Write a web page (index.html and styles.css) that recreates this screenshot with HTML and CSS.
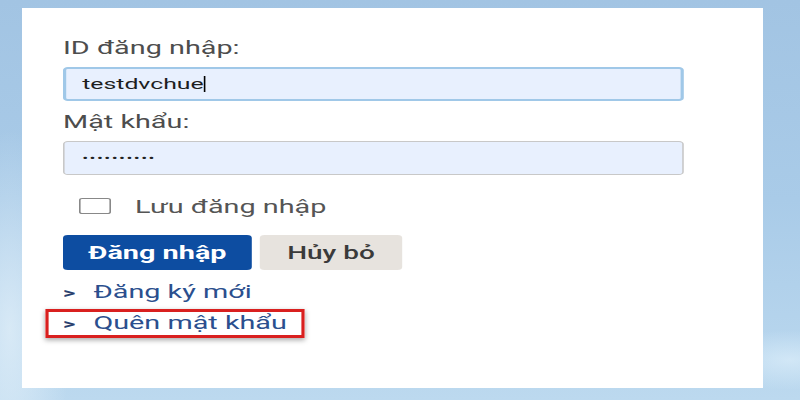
FILE: index.html
```html
<!DOCTYPE html>
<html lang="vi">

<head>
  <meta charset="UTF-8">
  <meta name="viewport" content="width=device-width, initial-scale=1.0">
  <title>Đăng nhập</title>
  <link rel="stylesheet" href="styles.css">
</head>

<body>

  <div class="card">
    <div class="form">
      <div class="label">ID đăng nhập:</div>
      <div class="field field-focus">
        <span class="value">testdvchue</span><span class="caret"></span>
      </div>

      <div class="label label-second">Mật khẩu:</div>
      <div class="field">
        <span class="dots">••••••••••</span>
      </div>

      <div class="remember">
        <span class="checkbox"></span>
        <span class="remember-text">Lưu đăng nhập</span>
      </div>

      <div class="buttons">
        <span class="btn btn-primary">Đăng nhập</span>
        <span class="btn btn-cancel">Hủy bỏ</span>
      </div>

      <div class="link"><span class="arrow">&gt;</span>Đăng ký mới</div>
      <div class="link link-marked"><span class="arrow">&gt;</span>Quên mật khẩu</div>
    </div>
  </div>

</body>

</html>
```

FILE: styles.css
```css
:root {
  --stretch: 1.6;
  --text-colour: #4d4d4d;
  --link-colour: #2b4f8e;
  --field-bg: #e8f0fe;
}

html,
body {
  margin: 0;
  padding: 0;
  height: 100%;
}

body {
  font-family: Roboto, "Liberation Sans", sans-serif;
  background-color: #a9cbe8;
  background-image:
    radial-gradient(ellipse 60px 200px at 10px 330px, rgba(230, 242, 250, 0.7), transparent),
    radial-gradient(ellipse 80px 30px at 790px 360px, rgba(220, 238, 250, 0.7), transparent),
    linear-gradient(180deg, #a2c4e3 0%, #a9cbe8 50%, #bcd9ef 100%);
  overflow: hidden;
}

.card {
  margin: 8px 0 0 22px;
  width: 741px;
  height: 380px;
  box-sizing: border-box;
  padding: 30px 0 0 41px;
  background-color: #fff;
}

.form {
  width: 388px;
  transform: scaleX(var(--stretch));
  transform-origin: 0 0;
}

.label {
  font-size: 18px;
  line-height: 20px;
  color: var(--text-colour);
  margin-bottom: 9px;
}

.label-second {
  margin-top: 11px;
}

.field {
  height: 34px;
  box-sizing: border-box;
  border: 1px solid #c8c8c8;
  border-radius: 3px;
  background-color: var(--field-bg);
  padding-left: 11px;
  display: flex;
  align-items: center;
}

.field-focus {
  border: 2px solid #a0c8e8;
  padding-left: 10px;
}

.value {
  font-size: 15.5px;
  color: #1e1e1e;
}

.caret {
  width: 1px;
  height: 16px;
  background-color: #000;
}

.dots {
  font-size: 11px;
  letter-spacing: 0.9px;
  color: #222;
  padding-top: 1px;
}

.remember {
  display: flex;
  align-items: center;
  height: 20px;
  margin-top: 21px;
  padding-left: 10px;
}

.checkbox {
  width: 18px;
  height: 14px;
  border: 1px solid #888;
  border-radius: 2px;
  margin-right: 15px;
}

.remember-text {
  font-size: 18px;
  color: #555;
}

.buttons {
  display: flex;
  gap: 5px;
  margin-top: 19px;
}

.btn {
  height: 35px;
  box-sizing: border-box;
  display: inline-flex;
  align-items: center;
  justify-content: center;
  border-radius: 3px;
  font-size: 18px;
  font-weight: 700;
}

.btn-primary {
  width: 118px;
  background-color: #0d4da1;
  color: #fff;
}

.btn-cancel {
  width: 89px;
  background-color: #e7e3de;
  color: #3a3a3a;
  font-size: 17.5px;
  font-weight: 500;
}

.link {
  position: relative;
  font-size: 18px;
  line-height: 20px;
  color: var(--link-colour);
  margin-top: 12px;
}

.link-marked {
  margin-top: 10px;
}

.arrow {
  display: inline-block;
  width: 19px;
  font-size: 15px;
  font-weight: 700;
  color: #2a3f6e;
}

.link-marked::after {
  content: "";
  position: absolute;
  left: -11px;
  top: -4px;
  width: 162px;
  height: 29px;
  box-sizing: border-box;
  border-top: 3px solid #d9201f;
  border-bottom: 3px solid #d9201f;
  border-left: 2px solid #d9201f;
  border-right: 2px solid #d9201f;
  box-shadow: 0 2px 4px rgba(0, 0, 0, 0.35);
}
```
